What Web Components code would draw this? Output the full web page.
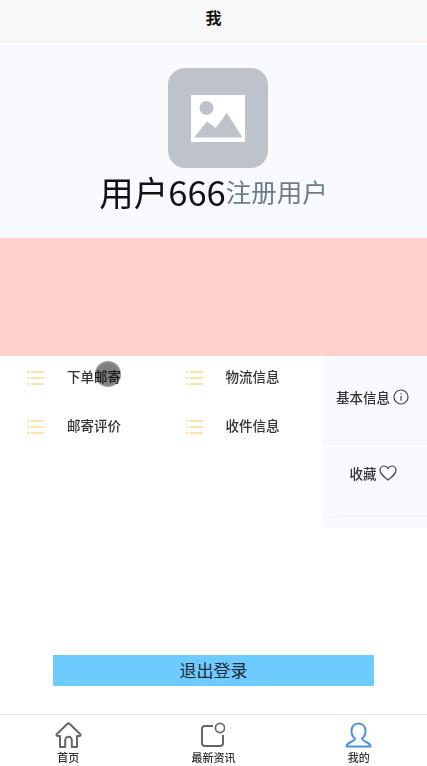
<!DOCTYPE html>
<html lang="zh">
<head>
<meta charset="utf-8">
<title>我</title>
<style>
  html, body { margin: 0; height: 100%; }
  body { font-family: "Noto Sans CJK SC", "Noto Sans", sans-serif; color: #222; background: #fff; }
</style>
</head>
<body>
<my-page></my-page>

<script>
class NavBar extends HTMLElement {
  constructor() {
    super();
    this.attachShadow({ mode: 'open' }).innerHTML = `
      <style>
        :host { display: flex; flex: none; height: 42px; box-sizing: border-box; align-items: center; justify-content: center;
                background: #f8f8f8; border-bottom: 1px solid #fbeeeb; font-size: 16px; font-weight: 700; color: #111; padding-bottom: 8px; }
      </style>
      <slot></slot>`;
  }
}

class UserHead extends HTMLElement {
  constructor() {
    super();
    this.attachShadow({ mode: 'open' }).innerHTML = `
      <style>
        :host { display: flex; flex: none; flex-direction: column; align-items: center; height: 196px; box-sizing: border-box;
                padding-top: 26px; background: #f8faff; }
        .avatar { width: 100px; height: 100px; margin-left: 9px; border-radius: 17px; background: #bec3cb; display: flex; align-items: center; justify-content: center; }
        .line { display: flex; align-items: center; height: 46px; line-height: 46px; }
        .name { font-size: 34.5px; color: #111; }
        .role { font-size: 25.5px; color: #6b7c8c; }
      </style>
      <div class="avatar">
        <svg width="54" height="47" viewBox="0 0 54 47">
          <rect width="54" height="47" fill="#fff"/>
          <circle cx="15.5" cy="13" r="7" fill="#bec3cb"/>
          <path d="M4 42 L16 27 L25 33.5 L35.7 18.5 L50.7 42 Z" fill="#bec3cb" stroke="#bec3cb" stroke-linejoin="round"/>
        </svg>
      </div>
      <div class="line"><span class="name">用户666</span><span class="role">注册用户</span></div>`;
  }
}

class MenuItem extends HTMLElement {
  constructor() {
    super();
    this.attachShadow({ mode: 'open' }).innerHTML = `
      <style>
        :host { display: flex; align-items: center; height: 49px; font-size: 13.5px; font-weight: 500; color: #333; }
        svg { margin: 5px 23px 0 27px; flex: none; }
      </style>
      <svg width="17" height="16" viewBox="0 0 17 16" fill="#fde3a6">
        <rect x="0" y="1" width="2.5" height="2"/><rect x="4" y="1" width="13" height="2"/>
        <rect x="0" y="7" width="2.5" height="2"/><rect x="4" y="7" width="13" height="2"/>
        <rect x="0" y="13" width="2.5" height="2"/><rect x="4" y="13" width="13" height="2"/>
      </svg>
      <slot></slot>`;
  }
}

class SideItem extends HTMLElement {
  constructor() {
    super();
    this.attachShadow({ mode: 'open' }).innerHTML = `
      <style>
        :host { display: flex; align-items: center; justify-content: center; gap: 3px; box-sizing: border-box; padding: 0 5px 2px 0;
                border-bottom: 1px solid #f1f3f8; font-size: 13.5px; font-weight: 500; color: #333; }
        :host([raised]) { padding-bottom: 12px; gap: 2px; padding-right: 4px; }
      </style>
      <slot></slot><slot name="icon"></slot>`;
  }
}

class TabItem extends HTMLElement {
  constructor() {
    super();
    this.attachShadow({ mode: 'open' }).innerHTML = `
      <style>
        :host { flex: 1; display: flex; flex-direction: column; align-items: center; font-size: 11px; line-height: 14px; font-weight: 500; color: #333; padding-top: 7px; }
        .icon { height: 28px; display: flex; align-items: flex-start; }
      </style>
      <div class="icon"><slot name="icon"></slot></div>
      <slot></slot>`;
  }
}

class MyPage extends HTMLElement {
  constructor() {
    super();
    this.attachShadow({ mode: 'open' }).innerHTML = `
      <style>
        :host { display: flex; flex-direction: column; height: 766px; overflow: hidden; filter: blur(.35px); }
        .banner { height: 118px; flex: none; background: #ffd0cc; }
        .body { position: relative; height: 358px; flex: none; display: flex; flex-direction: column; }
        .grid { display: flex; align-items: flex-start; height: 299px; flex: none; }
        .menu { width: 323px; display: grid; grid-template-columns: 158.5px 1fr; grid-auto-rows: 49px; margin-top: -5px; }
        .side { width: 104px; height: 172px; background: #f8faff; display: grid; grid-template-rows: 85px 76px; }
        .touch { position: absolute; left: 95px; top: 5px; width: 26px; height: 26px; border-radius: 50%;
                 background: radial-gradient(circle, rgba(0,0,0,.5) 55%, rgba(0,0,0,.28) 85%, rgba(0,0,0,0) 100%); }
        .logout { height: 31px; box-sizing: border-box; padding-bottom: 2px; margin: 0 53px; background: #6dcbff; display: flex; align-items: center; justify-content: center;
                  font-size: 17px; color: #1d2a33; }
        .tabs { height: 52px; flex: none; box-sizing: border-box; display: flex; gap: 18px; padding: 0 4.5px; border-top: 1.5px solid #e4e4e4; }
      </style>
      <nav-bar>我</nav-bar>
      <user-head></user-head>
      <div class="banner"></div>
      <div class="body">
        <div class="grid">
          <div class="menu">
            <menu-item>下单邮寄</menu-item>
            <menu-item>物流信息</menu-item>
            <menu-item>邮寄评价</menu-item>
            <menu-item>收件信息</menu-item>
          </div>
          <div class="side">
            <side-item>基本信息
              <svg slot="icon" width="16" height="16" viewBox="0 0 16 16" fill="none" stroke="#444" stroke-width="1.2">
                <circle cx="8" cy="8" r="7"/><path d="M8 7v4.5M8 4.2v1.4"/>
              </svg>
            </side-item>
            <side-item raised>收藏
              <svg slot="icon" width="18" height="16" viewBox="0 0 18 16" fill="none" stroke="#444" stroke-width="1.2">
                <path d="M9 15 C4 11 1 8.5 1 5.2 C1 2.8 2.9 1 5 1 C6.6 1 8.2 2 9 3.6 C9.8 2 11.4 1 13 1 C15.1 1 17 2.8 17 5.2 C17 8.5 14 11 9 15 Z"/>
              </svg>
            </side-item>
          </div>
        </div>
        <div class="touch"></div>
        <div class="logout">退出登录</div>
      </div>
      <div class="tabs">
        <tab-item>
          <svg slot="icon" width="27" height="27" viewBox="0 0 27 27" fill="none" stroke="#666" stroke-width="2" stroke-linejoin="round">
            <path d="M12.5 1.8 Q13.5 1 14.5 1.8 L25.3 12.2 Q26 13.6 24.5 14 L22 14 L22 25 L16.8 25 L16.8 18 A3.3 3.3 0 0 0 10.2 18 L10.2 25 L5 25 L5 14 L2.5 14 Q1 13.6 1.7 12.2 Z"/>
          </svg>
          首页
        </tab-item>
        <tab-item>
          <svg slot="icon" width="24" height="26" viewBox="0 0 24 26" fill="none" stroke="#666" stroke-width="2">
            <path d="M12 4 H4 Q1 4 1 7 V21 Q1 24 4 24 H19 Q22 24 22 21 V13"/>
            <circle cx="19" cy="6" r="4.6" stroke-width="1.7"/>
          </svg>
          最新资讯
        </tab-item>
        <tab-item>
          <svg slot="icon" width="27" height="27" viewBox="0 0 27 27" fill="none" stroke="#4a90ea" stroke-width="2" stroke-linejoin="round">
            <path d="M13.5 1.5 C9 1.5 6.5 5 6.5 9 C6.5 12.5 8 15 10 16.5 C10 18 8 19 5 20.5 C2.5 21.7 1.5 23 1.5 24.5 H25.5 C25.5 23 24.5 21.7 22 20.5 C19 19 17 18 17 16.5 C19 15 20.5 12.5 20.5 9 C20.5 5 18 1.5 13.5 1.5 Z"/>
          </svg>
          我的
        </tab-item>
      </div>`;
  }
}

customElements.define('nav-bar', NavBar);
customElements.define('user-head', UserHead);
customElements.define('menu-item', MenuItem);
customElements.define('side-item', SideItem);
customElements.define('tab-item', TabItem);
customElements.define('my-page', MyPage);
</script>
</body>
</html>
